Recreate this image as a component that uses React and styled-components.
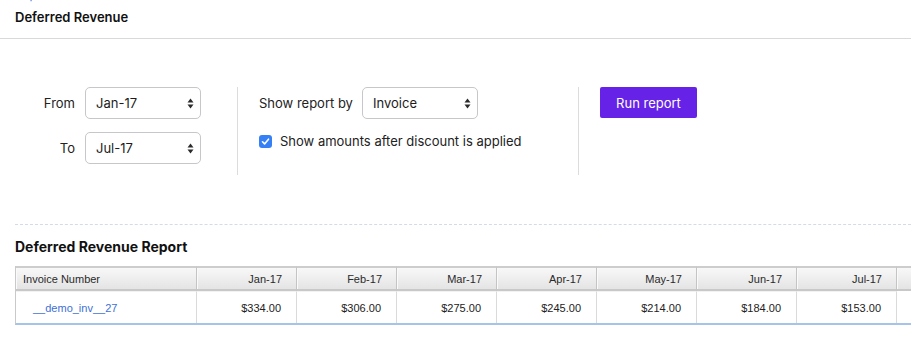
import React from "react";
import styled, { createGlobalStyle } from "styled-components";

const GlobalStyle = createGlobalStyle`
  body {
    margin: 0;
    background: #ffffff;
    font-family: Inter, "Liberation Sans", Arial, sans-serif;
    color: #1f1f1f;
    overflow: hidden;
  }
`;

const Page = styled.div`
  width: 911px;
  height: 348px;
  overflow: hidden;
`;

// top bar with breadcrumb + page title
const Header = styled.div`
  display: flow-root;
  box-sizing: border-box;
  height: 39px;
  padding: 0 15px;
  border-bottom: 1px solid #d9d9d9;
`;

const Breadcrumb = styled.a`
  display: block;
  margin-top: -12px;
  font-size: 12px;
  line-height: 14px;
  color: #4a7be0;
  text-decoration: none;
`;

const PageTitle = styled.h1`
  margin: 5px 0 0;
  font-size: 13px;
  line-height: 20px;
  font-weight: 600;
  color: #111;
`;

const Filters = styled.div`
  display: flex;
  margin-top: 48px;
  padding: 0 15px;
`;

const FilterColumn = styled.div`
  box-sizing: border-box;
  width: ${(p) => p.width}px;
  min-height: 88px;
  display: flex;
  flex-direction: column;
  gap: 13px;
  padding-left: ${(p) => (p.divided ? 21 : 0)}px;
  border-left: ${(p) => (p.divided ? "1px solid #dcdcdc" : "none")};
`;

const FieldRow = styled.div`
  display: flex;
  align-items: center;
`;

const Label = styled.label`
  width: ${(p) => p.width}px;
  margin-right: ${(p) => p.gap}px;
  text-align: ${(p) => p.align || "left"};
  font-size: 13px;
  color: #222;
  white-space: nowrap;
`;

const SelectBox = styled.div`
  box-sizing: border-box;
  width: 116px;
  height: 32px;
  display: flex;
  align-items: center;
  justify-content: space-between;
  padding: 0 6px 0 10px;
  border: 1px solid #c6c6cb;
  border-radius: 5px;
  background: #fff;
  font-size: 13px;
  color: #1c1c1c;
`;

const CheckRow = styled.label`
  display: flex;
  align-items: center;
  gap: 8px;
  height: 18px;
  font-size: 13px;
  color: #222;
`;

const CheckMark = styled.span`
  width: 13px;
  height: 13px;
  border-radius: 3px;
  background: #3580f4;
  display: flex;
  align-items: center;
  justify-content: center;
`;

const RunButton = styled.button`
  width: 97px;
  height: 31px;
  border: none;
  border-radius: 2px;
  background: #6623e7;
  color: #fff;
  font-family: Inter, "Liberation Sans", Arial, sans-serif;
  font-size: 13px;
  cursor: pointer;
`;

const DashedRule = styled.hr`
  margin: 49px 0 0 15px;
  border: none;
  border-top: 1px dashed #d3dbe8;
`;

const ReportSection = styled.section`
  padding-left: 15px;
`;

const ReportTitle = styled.h2`
  margin: 12px 0 9px;
  font-size: 14px;
  line-height: 20px;
  font-weight: 700;
  color: #111;
`;

const Grid = styled.div`
  display: grid;
  grid-template-columns: 181px repeat(7, 100px) 60px;
  font-family: "Liberation Sans", Arial, sans-serif;
  font-size: 11px;
  border-left: 1px solid #c9c9c9;
  border-bottom: 2px solid #a6c3ec;
`;

const HeadCell = styled.div`
  box-sizing: border-box;
  height: 25px;
  display: flex;
  align-items: center;
  justify-content: ${(p) => (p.right ? "flex-end" : "flex-start")};
  padding: ${(p) => (p.right ? "0 14px 0 0" : "0 0 0 7px")};
  background: linear-gradient(#f8f8f8, #e4e4e4);
  border-top: 2px solid #cdcdcd;
  border-bottom: 2px solid #c8c8c8;
  border-right: 1px solid #c4c4c4;
  box-shadow: inset 1px 0 0 #fafafa;
  color: #2a2a2a;
`;

const BodyCell = styled.div`
  box-sizing: border-box;
  height: 32px;
  display: flex;
  align-items: center;
  justify-content: ${(p) => (p.right ? "flex-end" : "flex-start")};
  padding: ${(p) => (p.right ? "0 15px 0 0" : "0 0 0 17px")};
  border-top: 1px solid #f2f2f2;
  border-right: ${(p) => (p.empty ? "none" : "1px solid #dadada")};
  border-top-color: ${(p) => (p.empty ? "transparent" : "#f2f2f2")};
  color: #222;
`;

const InvoiceLink = styled.a`
  color: #3d6fd6;
  text-decoration: none;
`;

const SelectArrows = () => (
  <svg width="7" height="11" viewBox="0 0 7 11">
    <path d="M3.5 0.5 L6.5 4.5 H0.5 Z" fill="#2b2b2b" />
    <path d="M3.5 10.5 L6.5 6.5 H0.5 Z" fill="#2b2b2b" />
  </svg>
);

const Select = ({ value }) => (
  <SelectBox>
    <span>{value}</span>
    <SelectArrows />
  </SelectBox>
);

const months = ["Jan-17", "Feb-17", "Mar-17", "Apr-17", "May-17", "Jun-17", "Jul-17"];
const amounts = ["$334.00", "$306.00", "$275.00", "$245.00", "$214.00", "$184.00", "$153.00"];

export default function App() {
  return (
    <Page>
      <GlobalStyle />
      <Header>
        <Breadcrumb>Reports</Breadcrumb>
        <PageTitle>Deferred Revenue</PageTitle>
      </Header>

      <Filters>
        <FilterColumn width={222}>
          <FieldRow>
            <Label width={60} gap={10} align="right">From</Label>
            <Select value="Jan-17" />
          </FieldRow>
          <FieldRow>
            <Label width={60} gap={10} align="right">To</Label>
            <Select value="Jul-17" />
          </FieldRow>
        </FilterColumn>

        <FilterColumn width={341} divided>
          <FieldRow>
            <Label width={92} gap={11}>Show report by</Label>
            <Select value="Invoice" />
          </FieldRow>
          <CheckRow>
            <CheckMark>
              <svg width="9" height="9" viewBox="0 0 9 9">
                <path d="M1.5 4.8 L3.6 6.9 L7.5 2.2" fill="none" stroke="#fff" strokeWidth="1.6" strokeLinecap="round" strokeLinejoin="round" />
              </svg>
            </CheckMark>
            Show amounts after discount is applied
          </CheckRow>
        </FilterColumn>

        <FilterColumn width={200} divided>
          <RunButton>Run report</RunButton>
        </FilterColumn>
      </Filters>

      <DashedRule />

      <ReportSection>
        <ReportTitle>Deferred Revenue Report</ReportTitle>
        <Grid>
          <HeadCell>Invoice Number</HeadCell>
          {months.map((m) => (
            <HeadCell key={m} right>{m}</HeadCell>
          ))}
          <HeadCell />

          <BodyCell>
            <InvoiceLink>__demo_inv__27</InvoiceLink>
          </BodyCell>
          {amounts.map((a, i) => (
            <BodyCell key={i} right>{a}</BodyCell>
          ))}
          <BodyCell empty />
        </Grid>
      </ReportSection>
    </Page>
  );
}
